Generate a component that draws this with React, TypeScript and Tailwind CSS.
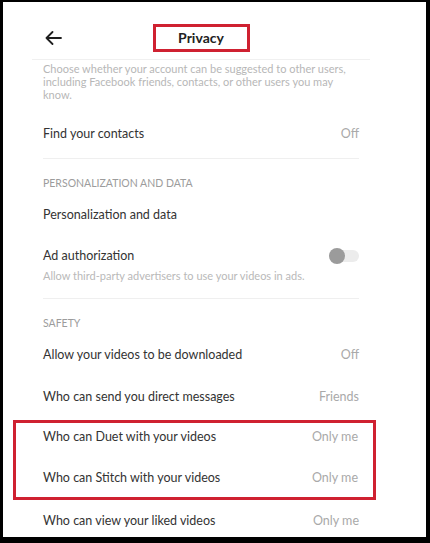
import React from "react";

type RowProps = {
  label: string;
  value?: string;
};

const Row = ({ label, value }: RowProps) => {
  return (
    <div className="flex h-[42px] items-center justify-between px-[11px]">
      <span className="text-[12.5px] text-[#333333]">{label}</span>
      {value ? <span className="text-[12.5px] text-[#a9a9a9]">{value}</span> : null}
    </div>
  );
};

const SectionLabel = ({ text }: { text: string }) => {
  return (
    <div className="mt-[15px] flex h-[20px] items-center px-[11px] text-[10.5px] text-[#9c9c9c]">
      {text}
    </div>
  );
};

const BackArrow = () => (
  <svg width="17" height="14" viewBox="0 0 17 14" fill="none">
    <path
      d="M16 7H1.5M7.5 1L1.5 7L7.5 13"
      stroke="#1f1f1f"
      strokeWidth="1.8"
      strokeLinecap="round"
      strokeLinejoin="round"
    />
  </svg>
);

export default function App() {
  return (
    <div className="h-[543px] w-[430px] overflow-hidden bg-black pb-[6px] pl-[3px] pr-[4px] pt-[2px] font-['Lato',sans-serif]">
      <div className="h-full w-full overflow-hidden bg-white">
        <div className="ml-[29px] w-[338px]">
          {/* header */}
          <div className="grid h-[58px] grid-cols-[1fr_auto_1fr] items-center border-b border-[#f0f0f0] pt-[14px]">
            <div className="pl-[13px]">
              <BackArrow />
            </div>
            <div className="flex h-[28px] w-[97px] items-center justify-center border-[3px] border-[#cf2131]">
              <span className="text-[14px] font-bold text-[#222222]">Privacy</span>
            </div>
            <div />
          </div>

          <p className="whitespace-nowrap px-[11px] pt-[2px] text-[11px] leading-[13px] text-[#b7b7b7]">
            Choose whether your account can be suggested to other users,
            <br />
            including Facebook friends, contacts, or other users you may
            <br />
            know.
          </p>

          <div className="mt-[12px]">
            <Row label="Find your contacts" value="Off" />
          </div>
          <div className="mx-[11px] mt-[3px] border-b border-[#efefef]" />

          <SectionLabel text="PERSONALIZATION AND DATA" />
          <Row label="Personalization and data" />

          <div className="flex h-[62px] items-start justify-between px-[11px] pt-[11px]">
            <div className="flex flex-col">
              <span className="text-[12.5px] leading-[18px] text-[#333333]">Ad authorization</span>
              <span className="mt-[3px] text-[11px] leading-[16px] text-[#b9b9b9]">
                Allow third-party advertisers to use your videos in ads.
              </span>
            </div>
            <div className="mt-[1px] flex h-[16px] w-[30px] items-center">
              <div className="relative flex h-[12px] w-[30px] items-center rounded-full bg-[#ececec]">
                <div className="absolute left-0 h-[16px] w-[16px] rounded-full bg-[#9b9b9b]" />
              </div>
            </div>
          </div>
          <div className="mx-[11px] border-b border-[#efefef]" />

          <SectionLabel text="SAFETY" />
          <Row label="Allow your videos to be downloaded" value="Off" />
          <Row label="Who can send you direct messages" value="Friends" />

          <div className="-ml-[19px] -mr-[6px] mt-[2px] flex flex-col gap-[23px] border-[3px] border-[#cf2131] pb-[10px] pl-[27px] pr-[15px] pt-[5px]">
            <div className="flex h-[18px] items-center justify-between">
              <span className="text-[12.5px] text-[#333333]">Who can Duet with your videos</span>
              <span className="text-[12.5px] text-[#a9a9a9]">Only me</span>
            </div>
            <div className="flex h-[18px] items-center justify-between">
              <span className="text-[12.5px] text-[#333333]">Who can Stitch with your videos</span>
              <span className="text-[12.5px] text-[#a9a9a9]">Only me</span>
            </div>
          </div>

          <div className="h-[40px]">
            <Row label="Who can view your liked videos" value="Only me" />
          </div>
        </div>
      </div>
    </div>
  );
}
